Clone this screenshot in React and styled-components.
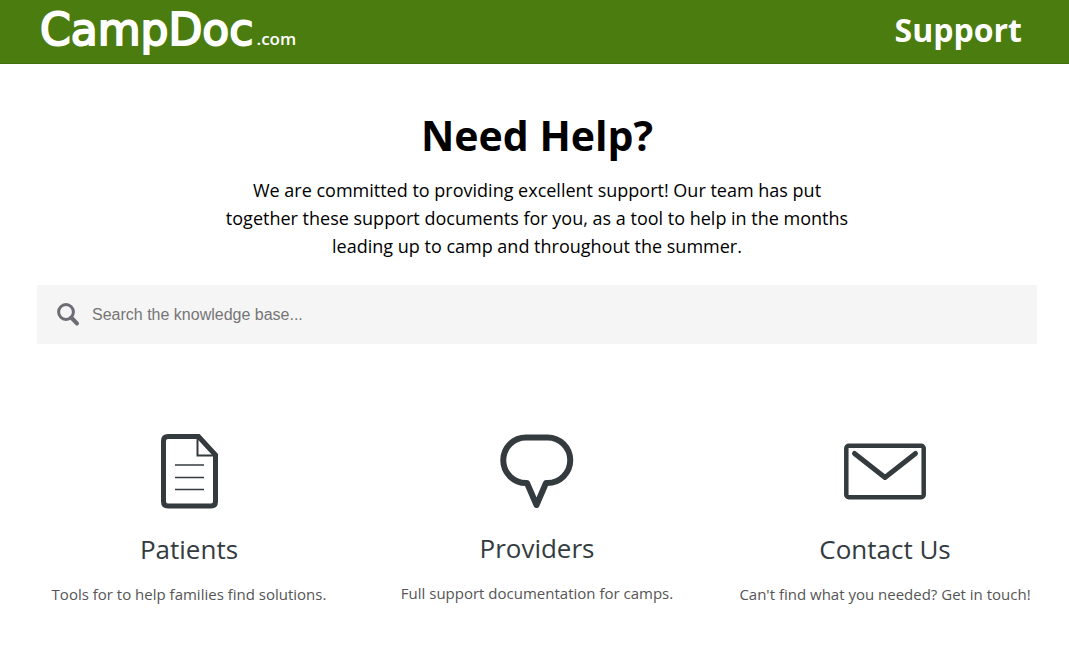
import React from 'react';
import styled, { createGlobalStyle } from 'styled-components';

const GlobalStyle = createGlobalStyle`
  *, *::before, *::after {
    box-sizing: border-box;
  }

  body {
    margin: 0;
    background: #fff;
    color: #000;
    font-family: 'Open Sans', 'Noto Sans', sans-serif;
  }
`;

const Header = styled.header`
  display: flex;
  justify-content: space-between;
  height: 64px;
  padding: 0 47px 0 40px;
  background: #4a7c0f;
  border-bottom: 1px solid #43700e;
  color: #fff;
`;

const Logo = styled.a`
  color: inherit;
  font-family: 'DejaVu Sans', sans-serif;
  font-size: 44px;
  line-height: 60px;
  text-decoration: none;
  -webkit-text-stroke: 2px #fff;
  stroke-linejoin: round;
`;

const LogoSuffix = styled.small`
  margin-left: 3px;
  font-family: 'Open Sans', sans-serif;
  font-size: 17px;
  font-weight: 600;
  line-height: 1;
  -webkit-text-stroke: 0;
`;

const HeaderTitle = styled.span`
  font-size: 32px;
  font-weight: 700;
  line-height: 60px;
`;

const Main = styled.main`
  max-width: 1069px;
  margin: 0 auto;
  padding: 43px 32px 40px 37px;
`;

const Intro = styled.section`
  max-width: 640px;
  margin: 0 auto;
  text-align: center;
`;

const Title = styled.h1`
  margin: 0 0 13px;
  font-size: 41px;
  font-weight: 700;
  line-height: 56px;
`;

const Lead = styled.p`
  margin: 0;
  font-size: 18px;
  line-height: 28px;
`;

const SearchForm = styled.form`
  display: flex;
  align-items: center;
  gap: 12px;
  height: 59px;
  margin-top: 25px;
  padding: 0 20px;
  background: #f5f5f5;
`;

const SearchLabel = styled.label`
  display: flex;
`;

const SearchInput = styled.input`
  flex: 1;
  height: 100%;
  padding: 0;
  border: 0;
  outline: 0;
  background: transparent;
  color: #333;
  font-family: 'Liberation Sans', Arial, sans-serif;
  font-size: 16px;

  &::placeholder {
    color: #757575;
    opacity: 1;
  }
`;

const Features = styled.section`
  display: grid;
  grid-template-columns: repeat(3, 1fr);
  gap: 44px;
  margin-top: 90px;

  @media (max-width: 768px) {
    grid-template-columns: 1fr;
  }
`;

const Feature = styled.a`
  color: #343b3f;
  text-align: center;
  text-decoration: none;

  svg {
    display: block;
    margin: 0 auto;
  }
`;

const FeatureTitle = styled.h2`
  margin: 21px 0 15px;
  font-size: 26px;
  font-weight: 400;
  line-height: 36px;
`;

const FeatureText = styled.p`
  margin: 0;
  color: #555;
  font-size: 15px;
  line-height: 24px;
  white-space: nowrap;
`;

const SearchIcon = () => (
  <svg width="23" height="24" viewBox="0 0 23 24" fill="none" stroke="#6e6c74" aria-hidden="true">
    <circle cx="9" cy="9" r="7.400" strokeWidth="3" />
    <path d="M14.200 14.500 20 20.500" strokeWidth="4" strokeLinecap="round" />
  </svg>
);

const DocumentIcon = () => (
  <svg width="58" height="76" viewBox="0 0 58 76" fill="none" stroke="#343b3f" aria-hidden="true">
    <path d="M38.500 2.500H8Q3.500 2.500 3.500 7V67.500Q3.500 72 8 72H51Q55.500 72 55.500 67.500V21Z" strokeWidth="5" />
    <path d="M37.500 3.500V21.500H55" strokeWidth="2" />
    <path d="M15 31H44M15 43.500H44M15 55.500H44" strokeWidth="1.600" />
  </svg>
);

const BubbleIcon = () => (
  <svg width="74" height="75" viewBox="0 0 74 75" fill="none" stroke="#343b3f" strokeWidth="6" strokeLinejoin="round" aria-hidden="true">
    <path d="M26 3.500H47.500A22.700 22.700 0 0 1 47.500 49H46L36.500 71 27 49H26A22.700 22.700 0 0 1 26 3.500Z" />
  </svg>
);

const EnvelopeIcon = () => (
  <svg width="82" height="76" viewBox="0 0 82 76" fill="none" stroke="#343b3f" strokeWidth="4.500" aria-hidden="true">
    <rect x="2.300" y="11.800" width="77.400" height="51.400" rx="2.500" />
    <path d="M10.500 19.500 41 43.500 71.500 19.500" strokeWidth="5" strokeLinecap="round" strokeLinejoin="round" />
  </svg>
);

const features = [
  {
    title: 'Patients',
    text: 'Tools for to help families find solutions.',
    href: '#patients',
    Icon: DocumentIcon
  },
  {
    title: 'Providers',
    text: 'Full support documentation for camps.',
    href: '#providers',
    Icon: BubbleIcon
  },
  {
    title: 'Contact Us',
    text: "Can't find what you needed? Get in touch!",
    href: '#contact',
    Icon: EnvelopeIcon
  }
];

function App() {
  return (
    <>
      <GlobalStyle />
      <Header>
        <Logo href="#home">
          CampDoc<LogoSuffix>.com</LogoSuffix>
        </Logo>
        <HeaderTitle>Support</HeaderTitle>
      </Header>

      <Main>
        <Intro>
          <Title>Need Help?</Title>
          <Lead>
            We are committed to providing excellent support! Our team has put together these
            support documents for you, as a tool to help in the months leading up to camp and
            throughout the summer.
          </Lead>
        </Intro>

        <SearchForm role="search" onSubmit={(e) => e.preventDefault()}>
          <SearchLabel htmlFor="search">
            <SearchIcon />
          </SearchLabel>
          <SearchInput
            id="search"
            type="search"
            aria-label="Search the knowledge base"
            placeholder="Search the knowledge base..."
          />
        </SearchForm>

        <Features>
          {features.map(({ title, text, href, Icon }) => (
            <Feature key={title} href={href}>
              <Icon />
              <FeatureTitle>{title}</FeatureTitle>
              <FeatureText>{text}</FeatureText>
            </Feature>
          ))}
        </Features>
      </Main>
    </>
  );
}

export default App;
